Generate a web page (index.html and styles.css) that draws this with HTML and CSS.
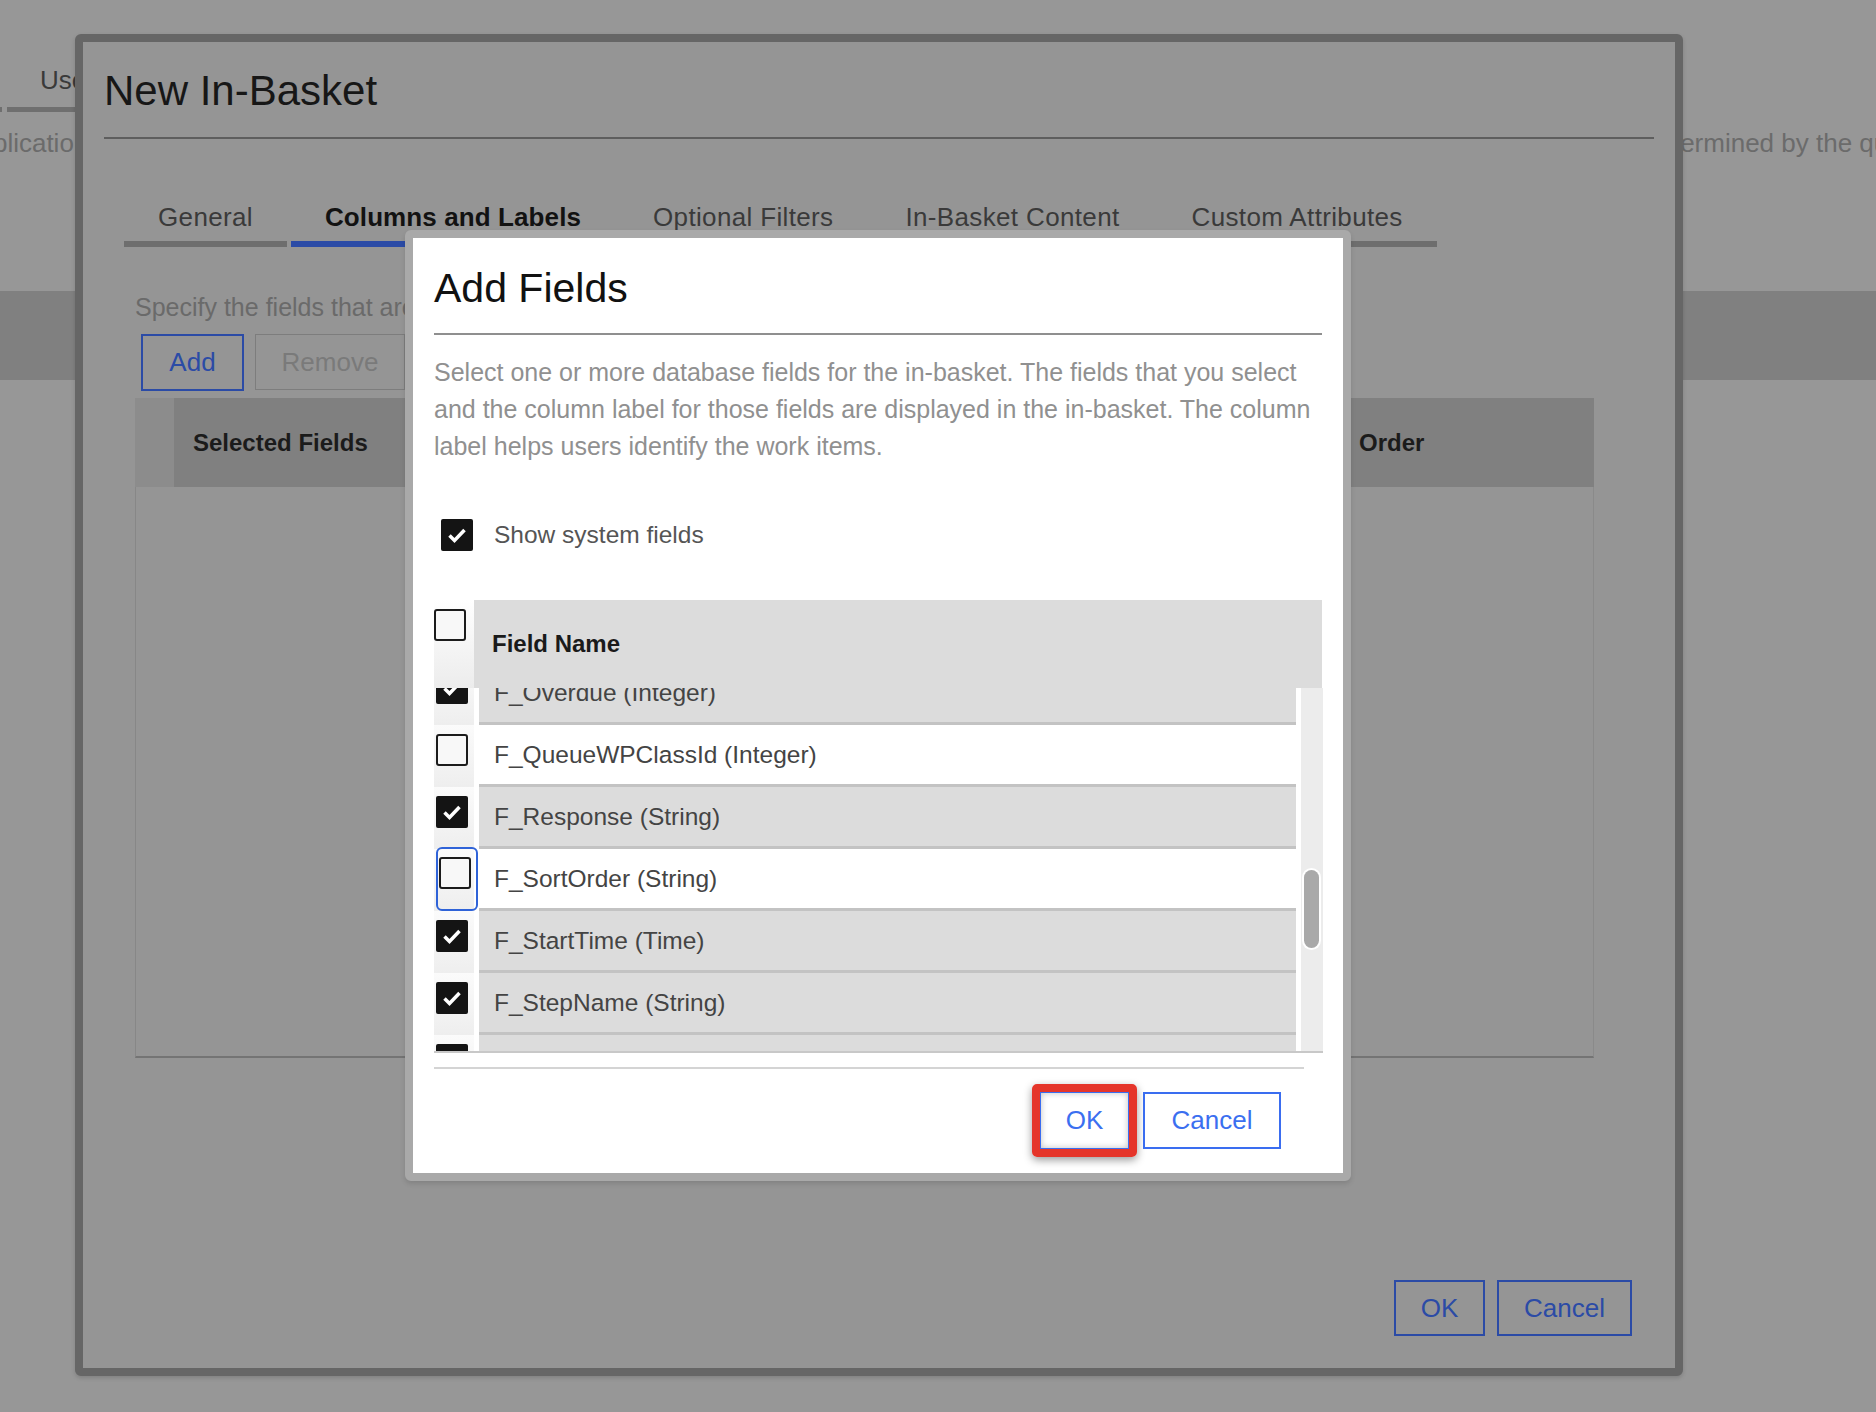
FILE: index.html
```html
<!DOCTYPE html>
<html lang="en">
<head>
<meta charset="utf-8">
<title>New In-Basket - Add Fields</title>
<link rel="stylesheet" href="styles.css">
</head>
<body>
<div class="page">
  <div class="page-tabs">
    <div class="ptab stub"></div>
    <div class="ptab">User Queues</div>
  </div>
  <div class="page-line">
    <span class="pl-left">application</span>
    <span class="pl-right">determined by the queue</span>
  </div>
  <div class="page-band"></div>
</div>

<div class="modal">
  <h1 class="modal-title">New In-Basket</h1>
  <div class="modal-rule"></div>
  <div class="tabs">
    <div class="tab">General</div>
    <div class="tab active">Columns and Labels</div>
    <div class="tab">Optional Filters</div>
    <div class="tab">In-Basket Content</div>
    <div class="tab">Custom Attributes</div>
  </div>
  <div class="section">
    <p class="hint">Specify the fields that are displayed in the in-basket and the labels for those fields.</p>
    <div class="actions">
      <button class="obtn obtn-add">Add</button>
      <button class="obtn obtn-remove">Remove</button>
    </div>
    <div class="grid">
      <div class="grid-head">
        <div class="gh-sel"></div>
        <div class="gh-cell">Selected Fields</div>
        <div class="gh-cell">Column Label</div>
        <div class="gh-cell">Order</div>
      </div>
      <div class="grid-body"></div>
    </div>
  </div>
  <div class="modal-foot">
    <button class="obtn obtn-ok">OK</button>
    <button class="obtn obtn-cancel">Cancel</button>
  </div>
</div>

<div class="dialog">
  <h2 class="dlg-title">Add Fields</h2>
  <div class="dlg-rule"></div>
  <p class="dlg-desc">Select one or more database fields for the in-basket. The fields that you select<br>and the column label for those fields are displayed in the in-basket. The column<br>label helps users identify the work items.</p>
  <div class="sys-row">
    <svg class="cb" viewBox="0 0 32 32" width="32" height="32"><rect width="32" height="32" rx="2" fill="#141414"/><path d="M8.5 16.5l5 5 10-10.5" fill="none" stroke="#fff" stroke-width="3.5"/></svg>
    <span class="sys-label">Show system fields</span>
  </div>
  <div class="ftable">
    <div class="fhead">
      <div class="fh-cb">
        <svg class="cb" viewBox="0 0 32 32" width="32" height="32"><rect x="1" y="1" width="30" height="30" rx="2" fill="#f8f8f8" stroke="#1c1c1c" stroke-width="2"/></svg>
      </div>
      <div class="fh-name">Field Name</div>
    </div>
    <div class="fscroll">
      <div class="frows">
        <div class="frows-inner">
          <div class="frow">
            <div class="fr-cb"><svg class="cb" viewBox="0 0 32 32" width="32" height="32"><rect width="32" height="32" rx="2" fill="#141414"/><path d="M8.5 16.5l5 5 10-10.5" fill="none" stroke="#fff" stroke-width="3.5"/></svg></div>
            <div class="fr-name sel">F_Overdue (Integer)</div>
          </div>
          <div class="frow">
            <div class="fr-cb"><svg class="cb" viewBox="0 0 32 32" width="32" height="32"><rect x="1" y="1" width="30" height="30" rx="2" fill="#f8f8f8" stroke="#1c1c1c" stroke-width="2"/></svg></div>
            <div class="fr-name">F_QueueWPClassId (Integer)</div>
          </div>
          <div class="frow">
            <div class="fr-cb"><svg class="cb" viewBox="0 0 32 32" width="32" height="32"><rect width="32" height="32" rx="2" fill="#141414"/><path d="M8.5 16.5l5 5 10-10.5" fill="none" stroke="#fff" stroke-width="3.5"/></svg></div>
            <div class="fr-name sel">F_Response (String)</div>
          </div>
          <div class="frow">
            <div class="fr-cb focus"><svg class="cb" viewBox="0 0 32 32" width="32" height="32"><rect x="1" y="1" width="30" height="30" rx="2" fill="#f8f8f8" stroke="#1c1c1c" stroke-width="2"/></svg></div>
            <div class="fr-name">F_SortOrder (String)</div>
          </div>
          <div class="frow">
            <div class="fr-cb"><svg class="cb" viewBox="0 0 32 32" width="32" height="32"><rect width="32" height="32" rx="2" fill="#141414"/><path d="M8.5 16.5l5 5 10-10.5" fill="none" stroke="#fff" stroke-width="3.5"/></svg></div>
            <div class="fr-name sel">F_StartTime (Time)</div>
          </div>
          <div class="frow">
            <div class="fr-cb"><svg class="cb" viewBox="0 0 32 32" width="32" height="32"><rect width="32" height="32" rx="2" fill="#141414"/><path d="M8.5 16.5l5 5 10-10.5" fill="none" stroke="#fff" stroke-width="3.5"/></svg></div>
            <div class="fr-name sel">F_StepName (String)</div>
          </div>
          <div class="frow">
            <div class="fr-cb"><svg class="cb" viewBox="0 0 32 32" width="32" height="32"><rect width="32" height="32" rx="2" fill="#141414"/><path d="M8.5 16.5l5 5 10-10.5" fill="none" stroke="#fff" stroke-width="3.5"/></svg></div>
            <div class="fr-name sel">F_Subject (String)</div>
          </div>
        </div>
      </div>
      <div class="ftrack"><div class="fthumb"></div></div>
    </div>
  </div>
  <div class="dlg-sep"></div>
  <div class="dlg-foot">
    <span class="hl"><button class="dbtn dbtn-ok">OK</button></span>
    <button class="dbtn dbtn-cancel">Cancel</button>
  </div>
</div>
</body>
</html>
```

FILE: styles.css
```css
* { box-sizing: border-box; }

html, body {
  margin: 0;
  padding: 0;
}

body {
  width: 1876px;
  height: 1412px;
  overflow: hidden;
  position: relative;
  background: #979797;
  font-family: "Liberation Sans", Arial, sans-serif;
}

/* ---------- background page (dimmed) ---------- */
.page-tabs {
  display: flex;
  align-items: flex-end;
  gap: 5px;
  padding-top: 65px;
}
.ptab {
  font-size: 26px;
  line-height: 30px;
  padding: 0 33px 12px;
  border-bottom: 5px solid #6f6f6f;
  color: #3a3a3a;
  white-space: nowrap;
}
.ptab.stub {
  width: 2px;
  padding: 0;
}
.page-line {
  display: flex;
  margin-top: 16px;
  font-size: 26px;
  line-height: 30px;
  color: #6b6b6b;
  white-space: nowrap;
}
.pl-left {
  flex: 0 0 1680px;
  margin-left: -36px;
}
.pl-right {
  flex: 0 0 auto;
}
.page-band {
  margin-top: 133px;
  height: 89px;
  background: #808080;
}

/* ---------- New In-Basket modal ---------- */
.modal {
  position: absolute;
  left: 75px;
  top: 34px;
  width: 1608px;
  height: 1342px;
  border: 8px solid #666666;
  border-radius: 6px;
  background: #959595;
  padding: 24px 21px 0 21px;
  display: flex;
  flex-direction: column;
  box-shadow: 0 2px 4px rgba(0,0,0,0.15);
}
.modal-title {
  margin: 0;
  font-size: 42px;
  line-height: 50px;
  font-weight: normal;
  color: #171717;
}
.modal-rule {
  margin-top: 21px;
  height: 2px;
  background: #5e5e5e;
}
.tabs {
  display: flex;
  gap: 4px;
  margin: 63px 0 0 20px;
}
.tab {
  font-size: 26px;
  line-height: 30px;
  letter-spacing: 0.35px;
  padding: 0 34px 9px;
  border-bottom: 6px solid #6e6e6e;
  color: #3a3a3a;
  white-space: nowrap;
}
.tab.active {
  font-weight: bold;
  letter-spacing: 0.1px;
  color: #121212;
  border-bottom-color: #2b4ba6;
}
.section {
  padding-left: 31px;
}
.hint {
  margin: 45px 0 0;
  font-size: 25px;
  line-height: 30px;
  color: #6a6a6a;
  white-space: nowrap;
}
.actions {
  display: flex;
  gap: 11px;
  margin: 12px 0 0 6px;
}
.obtn {
  font-family: "Liberation Sans", Arial, sans-serif;
  font-size: 26px;
  background: transparent;
  padding: 0;
  border-radius: 0;
}
.obtn-add {
  width: 103px;
  height: 57px;
  border: 2px solid #2b4ba6;
  color: #2b4ba6;
}
.obtn-remove {
  width: 150px;
  height: 56px;
  border: 1px solid #7d7d7d;
  color: #7a7a7a;
}
.grid {
  margin-top: 7px;
  width: 1459px;
}
.grid-head {
  display: grid;
  grid-template-columns: 39px 560px 1fr 254px;
  height: 89px;
  background: #808080;
}
.gh-sel {
  background: #8c8c8c;
}
.gh-cell {
  display: flex;
  align-items: center;
  padding-left: 19px;
  font-size: 24px;
  font-weight: bold;
  color: #1b1b1b;
}
.grid-body {
  height: 571px;
  border-left: 1px solid #878787;
  border-right: 1px solid #8a8a8a;
  border-bottom: 2px solid #747474;
}
.modal-foot {
  margin-top: auto;
  display: flex;
  justify-content: flex-end;
  gap: 12px;
  padding: 0 22px 32px 0;
}
.obtn-ok,
.obtn-cancel {
  height: 56px;
  border: 2px solid #2b4ba6;
  color: #2b4ba6;
}
.obtn-ok { width: 91px; }
.obtn-cancel { width: 135px; }

/* ---------- Add Fields dialog ---------- */
.dialog {
  position: absolute;
  left: 405px;
  top: 230px;
  width: 946px;
  height: 951px;
  border: 8px solid #a9a9a9;
  border-radius: 6px;
  background: #ffffff;
  padding: 26px 21px 0 21px;
  display: flex;
  flex-direction: column;
  box-shadow: 0 3px 5px rgba(0,0,0,0.12);
}
.dlg-title {
  margin: 0;
  font-size: 41px;
  line-height: 48px;
  font-weight: normal;
  color: #111;
}
.dlg-rule {
  margin-top: 21px;
  height: 2px;
  background: #8f8f8f;
}
.dlg-desc {
  margin: 19px 0 0;
  font-size: 25px;
  line-height: 37px;
  color: #909090;
  white-space: nowrap;
}
.sys-row {
  display: flex;
  align-items: center;
  margin-top: 54px;
  height: 32px;
  padding-left: 7px;
}
.cb {
  display: block;
  flex: 0 0 auto;
}
.sys-label {
  margin-left: 21px;
  font-size: 24.5px;
  color: #555;
}
.ftable {
  margin-top: 49px;
}
.fhead {
  display: flex;
  height: 88px;
}
.fh-cb {
  width: 40px;
  padding-top: 9px;
  background: linear-gradient(#ffffff, #ececec);
}
.fh-name {
  flex: 1;
  display: flex;
  align-items: center;
  padding-left: 18px;
  background: #dcdcdc;
  font-size: 24px;
  font-weight: bold;
  color: #1a1a1a;
}
.fscroll {
  display: flex;
  width: 889px;
  height: 365px;
  border-bottom: 2px solid #c8c8c8;
}
.frows {
  width: 862px;
  height: 363px;
  overflow: hidden;
}
.frows-inner {
  margin-top: -25px;
}
.frow {
  display: flex;
  height: 62px;
}
.fr-cb {
  position: relative;
  width: 40px;
  padding: 9px 0 0 2px;
  background: linear-gradient(#fbfbfb, #eeeeee);
}
.fr-cb.focus {
  padding: 8px 0 0 5px;
}
.fr-cb.focus::after {
  content: "";
  position: absolute;
  left: 2px;
  top: -2px;
  width: 38px;
  height: 60px;
  border: 2px solid #2f63d8;
  border-radius: 6px;
}
.fr-name {
  flex: 1;
  margin-left: 5px;
  display: flex;
  align-items: center;
  padding-left: 15px;
  border-bottom: 3px solid #c3c3c3;
  background: #ffffff;
  font-size: 24.5px;
  color: #444;
  white-space: nowrap;
}
.fr-name.sel {
  background: #dcdcdc;
}
.ftrack {
  width: 22px;
  margin-left: 5px;
  background: #ececec;
}
.fthumb {
  width: 15px;
  height: 78px;
  margin: 182px 0 0 3px;
  border-radius: 8px;
  background: #a9a9a9;
  box-shadow: 0 0 0 2px #ffffff;
}
.dlg-sep {
  margin-top: 14px;
  width: 870px;
  height: 2px;
  background: #d4d4d4;
}
.dlg-foot {
  display: flex;
  justify-content: flex-end;
  align-items: center;
  gap: 6px;
  margin-top: 15px;
  padding-right: 41px;
}
.hl {
  display: block;
  border: 8px solid #e5352a;
  border-radius: 5px;
  box-shadow: 0 3px 8px rgba(0,0,0,0.4);
}
.dbtn {
  display: block;
  font-family: "Liberation Sans", Arial, sans-serif;
  font-size: 26px;
  color: #3b6ff0;
  background: #ffffff;
  padding: 0;
  height: 57px;
  border-radius: 0;
}
.dbtn-ok {
  width: 89px;
  border: 1px solid #3a6df0;
  box-shadow: inset 0 0 6px rgba(0,0,0,0.25);
}
.dbtn-cancel {
  width: 138px;
  border: 2px solid #3a6df0;
}
```
